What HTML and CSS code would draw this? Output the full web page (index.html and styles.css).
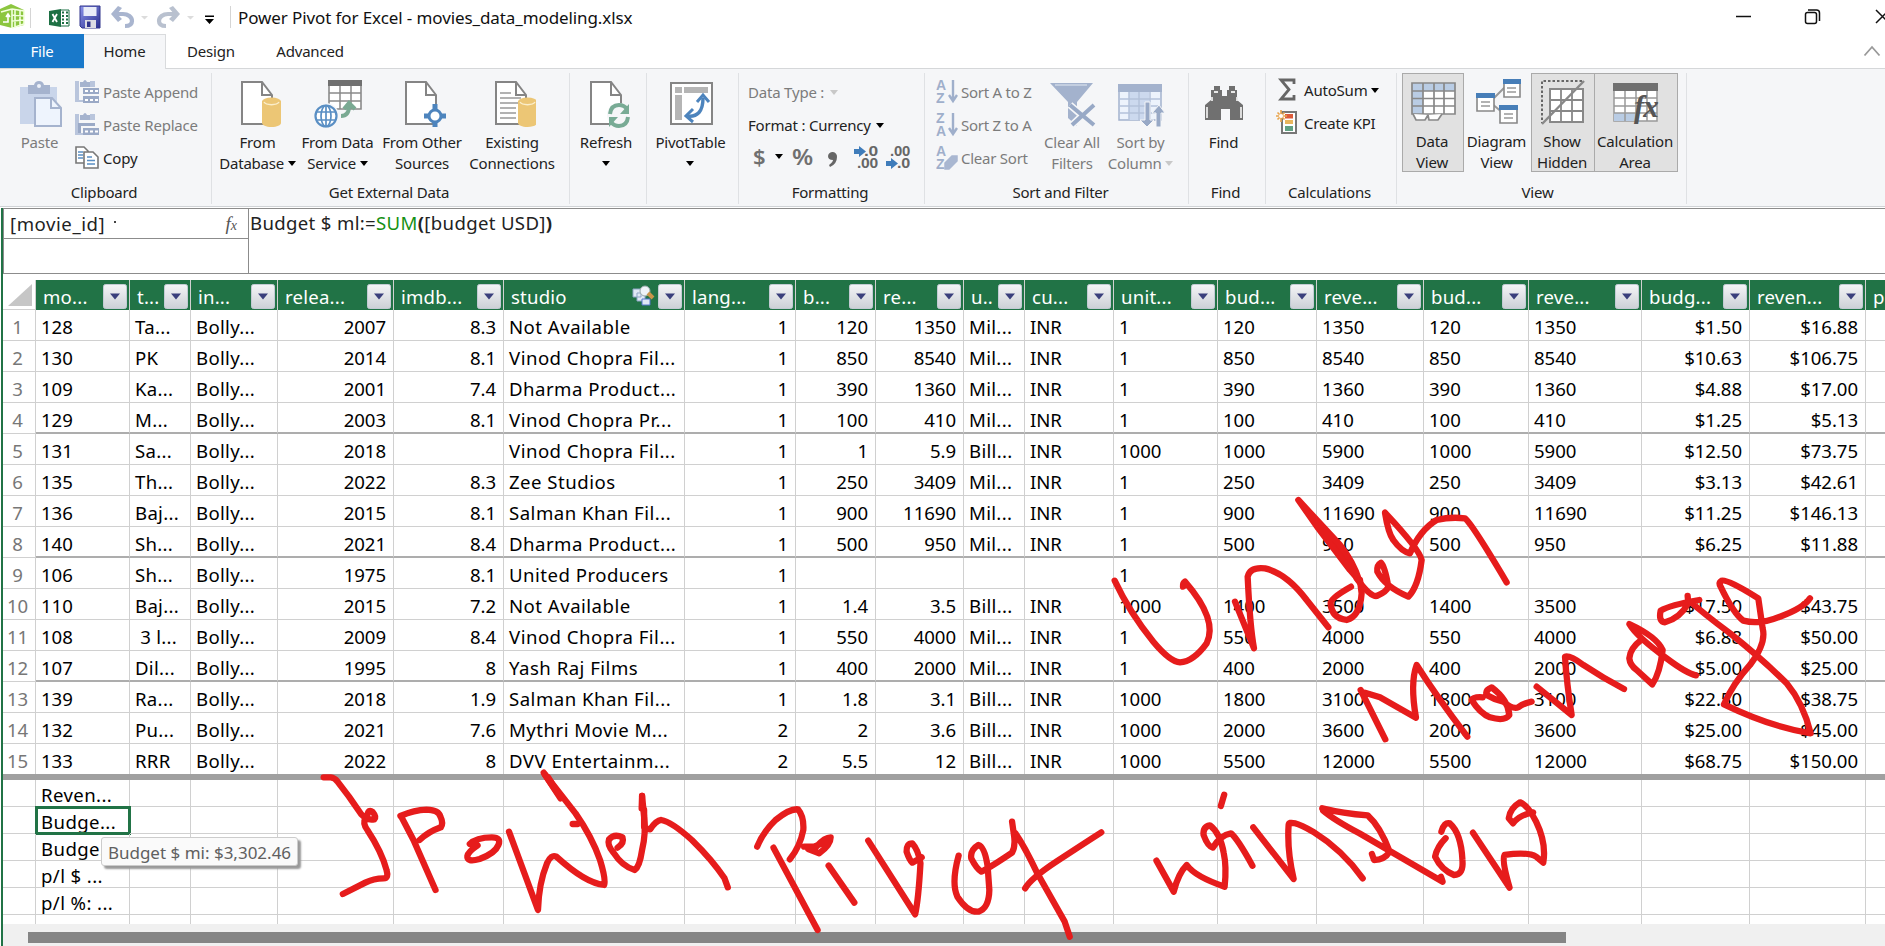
FILE: index.html
```
<!DOCTYPE html>
<html lang="en">
<head>
<meta charset="utf-8">
<title>Power Pivot for Excel - movies_data_modeling.xlsx</title>
<link rel="stylesheet" href="styles.css">
</head>
<body>
<svg class="defs" width="0" height="0">
  <defs>
    <linearGradient id="btn" x1="0" y1="0" x2="0" y2="1"><stop offset="0" stop-color="#f4f5f7"/><stop offset="1" stop-color="#ccd0d6"/></linearGradient>
    <linearGradient id="sv" x1="0" y1="0" x2="1" y2="1"><stop offset="0" stop-color="#8b93ea"/><stop offset="1" stop-color="#2a2f8e"/></linearGradient>
    <g id="page"><path d="M1 1h20l10 13v29H1z" fill="#fff" stroke="#858585" stroke-width="2"/><path d="M21 1v13h10" fill="none" stroke="#858585" stroke-width="2"/></g>
    <g id="cyl"><path d="M0 4v22c0 2 4 4 9.500 4s9.500-2 9.500-4V4z" fill="#ecc675"/><ellipse cx="9.500" cy="4.500" rx="9.500" ry="4" fill="#ecc675"/><path d="M2 5c2 3.500 13 3.500 15 0" fill="none" stroke="#fbeecb" stroke-width="1.500"/></g>
  </defs>
</svg>
<div class="window">
  <header class="titlebar">
    <svg class="qat" width="220" height="34" viewBox="0 0 220 34">
      <path d="M0 9l11-5 13 6v15l-12 3-12-3z" fill="#8cc63f"/><path d="M12 9v19M12 9l12 2v13l-12 4M15 10v17M20 11v15M12 15l12 1M12 21l12-1M12 9L1 12" fill="none" stroke="#f2ffdc" stroke-width="1.600"/><path d="M3 22h5v-7m-2 2l2-3 2 3" fill="none" stroke="#fff" stroke-width="1.600"/>
      <path d="M30.500 8v20" stroke="#d5d5d5"/>
      <path d="M49 11l12-2v18l-12-2z" fill="#1d7044"/><path d="M61 10h8v16h-8" fill="#fff" stroke="#1d7044"/><path d="M62 12.500h2m2 0h2M62 16h2m2 0h2M62 19.500h2m2 0h2M62 23h2m2 0h2" stroke="#1d7044" stroke-width="2.200"/><path d="M52.500 14l4.500 8m0-8l-4.500 8" stroke="#fff" stroke-width="1.800"/>
      <path d="M80 6h20v22H82l-2-2z" fill="url(#sv)" stroke="#30348c"/><path d="M83.500 7h13v9h-13z" fill="#e9ecf8"/><path d="M85 20h11v8H85z" fill="#dcdce4"/><path d="M87 21.500h3.500V27H87z" fill="#30348c"/>
      <path d="M114 14h9c5 0 9 3 9 7s-3 5-7 5" fill="none" stroke="#a9b5cf" stroke-width="4.200"/><path d="M111 14l7-8 4 2-5 6 5 5-4 3z" fill="#a9b5cf"/>
      <path d="M177 14h-9c-5 0-9 3-9 7s3 5 7 5" fill="none" stroke="#b9c1cf" stroke-width="4.200"/><path d="M180 14l-7-8-4 2 5 6-5 5 4 3z" fill="#b9c1cf"/>
      <path d="M141 16h7l-3.500 3.500zM187 16h7l-3.500 3.500z" fill="#dcdcdc"/>
      <path d="M205 15.500h9v1.600h-9zM205 19h9l-4.500 5z" fill="#000"/>
    </svg>
    <span class="bar"></span>
    <h1 class="title">Power Pivot for Excel - movies_data_modeling.xlsx</h1>
    <svg class="controls" width="160" height="34" viewBox="1725 0 160 34" fill="none" stroke="#111" stroke-width="1.500">
      <path d="M1736 16.500h15"/><rect x="1805.500" y="12.500" width="11" height="11" rx="2"/><path d="M1808 10h8.500q3 0 3 3v8"/><path d="M1876 10l13 13m0-13l-13 13"/>
    </svg>
  </header>
  <nav class="tabs">
    <span class="tab file">File</span><span class="tab home">Home</span><span class="tab design">Design</span><span class="tab adv">Advanced</span>
    <svg class="chev" width="18" height="12" viewBox="0 0 18 12"><path d="M1.500 10.500L9 2l7.500 8.500" fill="none" stroke="#999" stroke-width="1.800"/></svg>
  </nav>
  <section class="ribbon">
    <div class="group g-clip">
      <div class="items">
        <div class="big dim b-paste"><svg width="48" height="48" viewBox="0 0 48 48"><path d="M4 7h37v37H4z" fill="#c9d5ea"/><path d="M12 5h6q1-4 5-4t5 4h6v9H12z" fill="#a5b3ce"/><circle cx="23" cy="6" r="2" fill="#eef2fa"/><path d="M19 18h17l9 10v18H19z" fill="#eef4fd" stroke="#a5b3ce" stroke-width="2"/><path d="M35 18v10h10" fill="none" stroke="#a5b3ce" stroke-width="2"/></svg><span>Paste</span></div>
        <div class="stack">
          <div class="row dim"><svg width="25" height="25" viewBox="0 0 25 25"><path d="M0 2h4v19h4v2H0zM15 2h5v6h-5z" fill="#b9c5dc"/><path d="M5 3h3q2-4 4 0h3v5H5z" fill="#a5b3ce"/><path d="M8 9h16v6H8zM8 17h16v7H8z" fill="#9aa9c6"/><path d="M10 11h3v2h-3zm5 0h3v2h-3zm5 0h3v2h-3zM10 20h3v2h-3zm5 0h3v2h-3zm5 0h3v2h-3z" fill="#fff"/></svg><span>Paste Append</span></div>
          <div class="row dim"><svg width="25" height="25" viewBox="0 0 25 25"><path d="M0 2h4v19h4v2H0zM15 2h5v6h-5z" fill="#b9c5dc"/><path d="M5 3h3q2-4 4 0h3v5H5z" fill="#a5b3ce"/><path d="M3 11h17v3H6v7H3z" fill="#9aa9c6"/><path d="M8 16h16v7H8z" fill="#9aa9c6"/><path d="M10 18.500h3v2h-3zm5 0h3v2h-3zm5 0h3v2h-3z" fill="#fff"/></svg><span>Paste Replace</span></div>
          <div class="row"><svg width="25" height="25" viewBox="0 0 25 25" stroke="#777" stroke-width="1.600" fill="#fff"><path d="M1 2h8l4 4v12H1z"/><path d="M9 7h9l5 5v11H9z"/><path d="M3 7h5M3 10h5M3 13h5M12 12h5M12 15.500h8M12 19h8" stroke="#5a8fc4"/></svg><span>Copy</span></div>
        </div>
      </div>
      <div class="glabel">Clipboard</div>
    </div>
    <div class="group g-ext">
      <div class="items">
        <div class="big w80"><svg width="48" height="48" viewBox="0 0 48 48"><use href="#page" x="7" y="1"/><use href="#cyl" x="28" y="17"/></svg><span>From<br>Database <i class="ar"></i></span></div>
        <div class="big w80"><svg width="48" height="48" viewBox="0 0 48 48"><path d="M15 1h32v28H15z" fill="#fff" stroke="#8a8a8a" stroke-width="1.600"/><path d="M14 0h34v6H14z" fill="#707070"/><path d="M15 13h32M15 21h32M26 6v23M37 6v23" stroke="#8a8a8a" stroke-width="1.500"/><circle cx="12" cy="36" r="13" fill="#f5f6f8"/><circle cx="12" cy="36" r="10.500" fill="#fff" stroke="#5a8fc4" stroke-width="2.200"/><ellipse cx="12" cy="36" rx="5" ry="10.500" fill="none" stroke="#5a8fc4" stroke-width="1.700"/><path d="M2 32h20M2 40h20M12 26v20" stroke="#5a8fc4" stroke-width="1.700"/><path d="M27 36q8 0 8-10m-5 3l5-6 6 6" fill="none" stroke="#7aaa93" stroke-width="4"/></svg><span>From Data<br>Service <i class="ar"></i></span></div>
        <div class="big w89"><svg width="48" height="48" viewBox="0 0 48 48"><use href="#page" x="7" y="1"/><path d="M37 24v23M26 36h23" stroke="#4d84bd" stroke-width="5"/><circle cx="37" cy="36" r="6" fill="#fff" stroke="#4d84bd" stroke-width="3"/></svg><span>From Other<br>Sources</span></div>
        <div class="big w91"><svg width="48" height="48" viewBox="0 0 48 48"><use href="#page" x="7" y="1"/><path d="M12 13h11M12 18h21M12 23h18M12 28h16M12 33h16M12 38h16" stroke="#999" stroke-width="1.600"/><use href="#cyl" x="30" y="17"/></svg><span>Existing<br>Connections</span></div>
      </div>
      <div class="glabel gl-ext">Get External Data</div>
    </div>
    <div class="group g-ref"><div class="items"><div class="big w77"><svg width="48" height="48" viewBox="0 0 48 48"><use href="#page" x="8" y="1"/><circle cx="37" cy="35" r="12" fill="#f5f6f8"/><path d="M28 34q1-9 9-9 5 0 8 4M46 37q-1 9-9 9-5 0-8-4" fill="none" stroke="#78ab95" stroke-width="4"/><path d="M47 24v10h-9zM27 47V37h9z" fill="#78ab95"/></svg><span>Refresh<br><i class="ar"></i></span></div></div></div>
    <div class="group g-piv"><div class="items"><div class="big w92"><svg width="48" height="48" viewBox="0 0 48 48"><path d="M4 3h41v41H4z" fill="#fff" stroke="#858585" stroke-width="2"/><path d="M8 7h7v6H8zM17 7h24v6H17zM8 15h7v25H8z" fill="#b5b5b5"/><path d="M20 36q16 2 16-18" fill="none" stroke="#4d84bd" stroke-width="3.400"/><path d="M30 22l6-7 6 7M26 29l-7 7 7 6" fill="none" stroke="#4d84bd" stroke-width="3"/></svg><span>PivotTable<br><i class="ar"></i></span></div></div></div>
    <div class="group g-fmt">
      <div class="fmt">
        <div class="frow dim">Data Type : <i class="ar"></i></div>
        <div class="frow">Format : Currency <i class="ar"></i></div>
        <svg width="170" height="30" viewBox="0 0 170 30"><g class="sym"><text x="5" y="23">$</text><text x="44" y="23" textLength="21" lengthAdjust="spacingAndGlyphs">%</text></g><path d="M27 12h8l-4 5z" fill="#000"/><path d="M80 14a4.500 4.500 0 1 1 9 1q0 7-7 10l-1-2q4-3 4-5-5 0-5-4z" fill="#666"/><g class="num"><text x="116" y="14" textLength="14" lengthAdjust="spacingAndGlyphs">.0</text><text x="109" y="26" textLength="21" lengthAdjust="spacingAndGlyphs">.00</text><text x="142" y="14" textLength="20" lengthAdjust="spacingAndGlyphs">.00</text><text x="149" y="26" textLength="13" lengthAdjust="spacingAndGlyphs">.0</text></g><path d="M106 7h5V4l7 5.500-7 5.500v-3h-5zM138 19h5v-3l7 5.500-7 5.500v-3h-5z" fill="#3f7cba"/></svg>
      </div>
      <div class="glabel">Formatting</div>
    </div>
    <div class="group g-sort">
      <div class="items">
        <div class="stack">
          <div class="row dim"><svg width="25" height="25" viewBox="0 0 25 25"><g class="az"><text x="0" y="11">A</text><text x="0" y="24">Z</text></g><path d="M17 1v20m-4-5l4 6 4-6" fill="none" stroke="#9fafcb" stroke-width="2.400"/></svg><span>Sort A to Z</span></div>
          <div class="row dim"><svg width="25" height="25" viewBox="0 0 25 25"><g class="az"><text x="0" y="11">Z</text><text x="0" y="24">A</text></g><path d="M17 1v20m-4-5l4 6 4-6" fill="none" stroke="#9fafcb" stroke-width="2.400"/></svg><span>Sort Z to A</span></div>
          <div class="row dim"><svg width="25" height="25" viewBox="0 0 25 25"><g class="az"><text x="0" y="11">A</text><text x="0" y="24">Z</text></g><path d="M9 18l7-7h5v5l-8 8H9z" fill="#a9b7d1" stroke="#a9b7d1" stroke-width="1.500"/></svg><span>Clear Sort</span></div>
        </div>
        <div class="big dim w67"><svg width="48" height="48" viewBox="0 0 48 48"><path d="M2 3h43L29 22v24l-9-8V22z" fill="#a3b2cd"/><path d="M7 5h32" stroke="#c3cee0" stroke-width="2"/><path d="M22 25l22 19M45 25L24 45" stroke="#f5f6f8" stroke-width="7"/><path d="M22 25l24 20M46 25L24 45" stroke="#98a9c6" stroke-width="4"/></svg><span>Clear All<br>Filters</span></div>
        <div class="big dim w70"><svg width="48" height="48" viewBox="0 0 48 48"><path d="M2 5h42v35H2z" fill="#edf3fc" stroke="#a3b2cd" stroke-width="1.500"/><path d="M12 12h20v28H12z" fill="#ccd9ee"/><path d="M1 4h44v8H1z" fill="#a3b2cd"/><path d="M2 19h42M2 26h42M2 33h42M12 12v28M22 12v28M33 12v28" stroke="#b4c2da" stroke-width="1.500"/><path d="M28 22v18h-5l7 7 7-7h-4V22zM39 47V33h-4l7-8 6 8h-4v14z" fill="#98a9c6" stroke="#f5f6f8"/></svg><span>Sort by<br>Column <i class="ar"></i></span></div>
      </div>
      <div class="glabel">Sort and Filter</div>
    </div>
    <div class="group g-find"><div class="items"><div class="big w70"><svg width="48" height="48" viewBox="0 0 48 48"><path d="M14 6h6v4h2v6h5v-6h2V6h6v4h2v10l6 5v15H30V29h-9v11H5V25l6-5V10h3z" fill="#707070"/><path d="M7 27v11M41 27v11M14 12h4M31 12h4M12 17v4M37 17v4" stroke="#e8e8e8" stroke-width="1.800"/></svg><span>Find</span></div></div><div class="glabel">Find</div></div>
    <div class="group g-calc">
      <div class="stack">
        <div class="row"><svg width="25" height="25" viewBox="0 0 25 25"><path d="M18 7V3H5l8 9.500L5 22h13v-4" fill="none" stroke="#666" stroke-width="2.800"/></svg><span>AutoSum <i class="ar"></i></span></div>
        <div class="row"><svg width="25" height="25" viewBox="0 0 25 25"><path d="M6 2h14v21H6z" fill="#fff" stroke="#777" stroke-width="2"/><path d="M9 4h8v4.500H9z" fill="#dc5b3b"/><path d="M9 10h8v4H9z" fill="#e9b65d"/><path d="M9 16h8v5H9z" fill="#62a184"/><path d="M5 0v12M0 6h11M1.500 2.500l7 7M8.500 2.500l-7 7" stroke="#e9a64f" stroke-width="1.700"/><circle cx="5" cy="6" r="2" fill="#fff"/></svg><span>Create KPI</span></div>
      </div>
      <div class="glabel">Calculations</div>
    </div>
    <div class="group g-view">
      <div class="items">
        <div class="big on v1"><svg width="48" height="48" viewBox="0 0 48 48"><path d="M4 4h43v31H4z" fill="#fff"/><path d="M4 4h43v8H4zM4 12h11v23H4z" fill="#b9cce4"/><path d="M4 4h43v31H4zM4 12h43M4 19.500h43M4 27h43M15 4v31M26 4v31M36 4v31" fill="none" stroke="#888" stroke-width="1.700"/><path d="M5 35l3 6h9l3-5M20 36l1 5h9l4-6" fill="#fff" stroke="#888" stroke-width="1.700"/></svg><span>Data<br>View</span></div>
        <div class="big v2"><svg width="48" height="48" viewBox="0 0 48 48"><path d="M18 22L32 8M18 24l12 10" stroke="#999" stroke-width="2"/><g fill="#fff" stroke="#888" stroke-width="1.600"><path d="M31 1h16v17H31zM4 15h17v17H4zM27 27h17v17H27z"/></g><path d="M30 0h18v5H30zM3 14h19v5H3zM26 26h19v5H26z" fill="#477eb8"/><path d="M34 9h9M34 13h9M8 23h9M8 27h9M31 35h9M31 39h9" stroke="#999" stroke-width="1.500"/></svg><span>Diagram<br>View</span></div>
        <div class="big on v3"><svg width="48" height="48" viewBox="0 0 48 48"><path d="M12 10h33v33H12z" fill="#fff" stroke="#888" stroke-width="2"/><path d="M12 21h33M12 32h33M23 10v33M34 10v33" stroke="#888" stroke-width="1.800"/><path d="M44 2H4v42" fill="none" stroke="#666" stroke-width="2" stroke-dasharray="2.500 2"/><path d="M4 45L46 2" stroke="#888" stroke-width="2.400"/></svg><span>Show<br>Hidden</span></div>
        <div class="big on v4"><svg width="48" height="48" viewBox="0 0 48 48"><path d="M3 5h43v37H3z" fill="#fff" stroke="#999" stroke-width="1.500"/><path d="M2 4h45v8H2z" fill="#707070"/><path d="M3 34h22v8H3z" fill="#b9cce4"/><path d="M3 19h43M3 27h43M3 34h43M14 12v30M25 12v30M36 12v30" stroke="#999" stroke-width="1.500"/><text class="fxi" x="23" y="38">fx</text></svg><span>Calculation<br>Area</span></div>
      </div>
      <div class="glabel gl-view">View</div>
    </div>
  </section>
  <main class="sheet">
    <div class="fbar">
      <div class="names"><div class="namebox"><span>[movie_id]</span><b></b><em>f<small>x</small></em></div></div>
      <div class="formula">Budget $ ml:=<span class="fn">SUM</span><b>(</b>[budget USD]<b>)</b></div>
    </div>
    <div class="grid" id="grid"></div>
    <div class="split"></div>
    <div class="calc" id="calc"></div>
    <div class="scroll"><div class="thumb"></div></div>
    <div class="tip">Budget $ mi: $3,302.46</div>
  </main>
  <svg class="ink" width="1885" height="946" viewBox="0 0 1885 946">
    <g transform="translate(300 750) scale(.4082 .3333)">
      <path d="M58 82H75Q85 83 92 95L120 140L150 193Q158 205 165 195Q168 176 178 186Q188 200 182 208Q170 210 160 205Q153 220 165 240Q200 305 212 360Q218 385 205 385Q180 385 160 398L105 432"/>
      <path d="M248 200L278 270L332 420M246 198Q280 180 310 179Q340 180 344 200Q352 220 345 232Q315 245 293 270"/>
      <path d="M416 282Q432 262 470 262Q494 262 486 285Q478 310 440 327Q408 338 410 318Q412 305 435 286"/>
      <path d="M512 245L583 480Q585 400 605 340Q615 312 628 320Q700 400 745 405Q750 390 735 330Q715 260 675 190L597 68L638 145"/><path d="M600 74L632 130L608 82M668 222H680"/>
      <path d="M778 293Q795 280 790 262Q770 250 757 268Q752 285 768 308Q790 350 820 360Q832 350 838 300Q848 250 843 200L838 138M845 235L858 238Q872 212 885 210Q910 215 960 270Q1010 330 1040 385L1048 412"/><path d="M838 138L837 175M843 180V230"/>
      <path d="M1120 290Q1135 245 1165 210Q1200 175 1220 178Q1235 200 1233 240Q1225 290 1200 328M1160 293L1268 540M1235 290L1265 290Q1285 262 1300 262Q1300 285 1272 310L1245 297L1290 275M1295 347L1358 458"/>
      <path d="M1392 272L1507 493Q1515 450 1520 340Q1515 300 1500 280Q1485 280 1486 305Q1493 330 1500 338L1523 322"/>
    </g>
    <g transform="translate(930 750) scale(.4209 .3333)">
      <path d="M68 317Q50 400 65 440Q90 488 115 485Q140 475 141 420L137 350Q130 290 115 285Q95 300 98 325Q110 355 122 365Q140 355 195 308Q203 290 200 260L195 215M203 250Q225 290 255 370L320 515L332 560M226 415Q240 385 300 335Q360 285 407 247"/>
      <path d="M538 332L579 425Q590 370 610 345Q630 380 700 410Q705 350 698 310Q690 250 665 226Q648 230 650 255Q660 290 672 293Q690 255 715 250Q730 265 766 347M699 134L691 168"/>
      <path d="M768 232L864 387Q848 300 852 225Q853 205 910 245Q980 300 1028 385"/>
      <path d="M934 182Q960 210 1020 250L1218 395L1214 380M932 175Q980 190 1040 196Q1070 230 1092 305Q1080 330 1055 330L1050 312"/>
      <path d="M1215 245Q1222 215 1235 220Q1262 250 1265 330Q1268 375 1245 375Q1215 360 1200 320Q1205 290 1225 265"/>
      <path d="M1290 248L1377 413Q1358 330 1365 315Q1420 305 1440 320L1457 338Q1465 280 1440 215Q1420 165 1402 157Q1378 175 1375 205L1385 220Q1400 195 1433 187"/>
    </g>
    <g transform="translate(1090 470) scale(.3333)">
      <path d="M74 332Q120 430 190 515Q240 575 270 577Q310 575 350 520Q385 450 285 335Q278 340 279 350"/>
      <path d="M435 395L492 535Q480 470 473 320Q480 290 525 295Q590 310 650 390L715 472"/>
      <path d="M783 350Q720 385 722 400Q725 445 770 450Q810 440 815 370L810 330"/>
      <path class="fill" d="M625 90L750 225Q790 275 808 332L780 300L685 175Z"/>
      <path d="M800 325Q840 380 860 378Q890 365 895 350Q885 290 873 278Q860 285 862 305Q885 350 955 380Q985 350 995 270Q990 240 885 128Q895 190 910 210Q935 245 960 250Q990 180 1040 150Q1080 140 1125 145Q1145 160 1250 337"/>
      <path d="M812 660L886 808M825 668L870 682L978 743Q960 640 980 585Q1040 680 1132 800"/>
      <path d="M1178 682Q1150 680 1145 690Q1170 730 1200 742Q1245 755 1258 735Q1255 690 1205 652Q1185 660 1190 675Q1215 690 1240 695Q1270 720 1285 712Q1300 700 1325 695"/>
    </g>
    <g transform="translate(1470 550) scale(.3333)">
      <path d="M200 410L305 495Q290 400 285 320Q300 315 340 345Q400 385 462 417"/>
      <path d="M516 268Q480 295 478 325Q480 345 500 360L547 403Q570 370 578 300Q560 260 478 222Q500 260 590 325Q650 370 678 376"/>
      <path d="M688 150Q600 165 572 182Q565 215 585 217Q630 205 655 160L653 138M655 150Q700 190 780 250Q880 330 950 400Q1000 460 1022 550Q900 530 762 463Q790 400 840 345Q890 280 878 235L865 145Q770 85 755 92Q745 98 752 110Q790 190 820 212Q870 225 930 200Q1000 175 1020 145"/>
    </g>
  </svg>
</div>
<script src="grid.js"></script>
</body>
</html>
```
FILE: styles.css
```
*{box-sizing:border-box}
body{margin:0;background:#fff;font-family:"Noto Sans","Open Sans",sans-serif;color:#222}
.defs{position:absolute}
.window{position:relative;width:1885px;height:946px;overflow:hidden;display:flex;flex-direction:column;background:#fff}
.titlebar{height:34px;display:flex;align-items:center;flex:none}
.bar{width:1px;height:22px;background:#d5d5d5;margin:0 7px 0 10px}
.title{margin:2px auto 0 0;font-size:17px;font-weight:400;line-height:30px;letter-spacing:-.1px;color:#111}
.tabs{height:34px;display:flex;flex:none;font-size:15px;line-height:34px;text-align:center;letter-spacing:-.2px;align-items:stretch}
.file{width:84px;background:#1979ca;color:#fff}
.home{width:82px;height:35px;line-height:33px;background:#f5f6f8;border:1px solid #d9dbdd;border-width:1px 1px 0 0;z-index:1}
.design{width:90px}
.adv{width:108px}
.chev{margin:11px 4px 0 auto}
.ribbon{height:139px;flex:none;display:flex;background:#f5f6f8;border-top:1px solid #d5d7d9;border-bottom:1px solid #d0d3d6;font-size:15px;letter-spacing:-.2px}
.group{border-right:1px solid #dfe1e4;margin:4px 0 4px;height:131px;display:flex;flex-direction:column;justify-content:space-between}
.glabel{text-align:center;line-height:20px;padding:0 3px 2px 0}
.gl-ext{padding-right:9px}
.gl-view{padding-right:13px}
.items{display:flex}
.big{display:flex;flex-direction:column;align-items:center;text-align:center;padding:7px 1px 0 0;line-height:21px;white-space:nowrap}
.big svg{margin-bottom:4px;flex:none}
.dim{color:#7c7c7c}
.ar{display:inline-block;border:4px solid transparent;border-top:5px solid #000;border-bottom:0;vertical-align:3px}
.dim .ar{border-top-color:#c8c8c8}
.stack{display:flex;flex-direction:column}
.row{display:flex;align-items:center;gap:3px;height:33px;white-space:nowrap}
.g-clip{width:212px}.b-paste{width:75px;padding-left:5px}
.g-clip .stack,.g-sort .stack{padding-top:2px}
.g-ext{width:358px;padding-left:6px}
.g-ref{width:77px}.g-piv{width:92px}.g-fmt{width:186px}.g-sort{width:264px;padding-left:11px}.g-find{width:77px}.g-calc{width:131px;padding-left:10px}.g-view{width:290px;padding-left:5px}
.w80{width:80px}.w89{width:89px}.w91{width:91px}.w77{width:73px}.w92{width:88px}.w67{width:67px}.w70{width:70px}
.g-sort .stack{width:103px;letter-spacing:-.25px}
.g-sort .row{gap:0}
.fmt{padding:3px 0 0 9px}
.frow{height:33px;line-height:33px;white-space:nowrap}
.frow .ar{margin-left:2px}
.fmt svg{display:block}
.sym{font:600 22px "Noto Sans";fill:#707070}
.num{font:700 14px "Liberation Sans";fill:#666}
.az{font:700 14px "Liberation Sans";fill:#9fafcb}
.fxi{font:italic 700 31px "Liberation Serif";fill:#555;letter-spacing:-1px}
.g-calc .glabel{margin-left:-10px}
.g-view .big{height:99px;padding-top:6px;padding-right:2px}
.g-view .on{padding-top:5px}
.on{background:#e1e1e1;border:1px solid #aaa}
.v1{width:62px}.v2{width:67px}.v3{width:63px}.v4{width:84px}
.v3{border-right:0}
.sheet{position:relative;flex:1;display:flex;flex-direction:column;border-left:2px solid #217346;margin:1px 0 0 1px}
.fbar{height:66px;flex:none;display:flex;border:1px solid #8c8c8c;border-right:0;font-size:18.600px}
.names{width:245px;border-right:1px solid #8c8c8c}
.namebox{height:30px;border-bottom:1px solid #8c8c8c;display:flex;align-items:center;padding-left:6px;letter-spacing:.55px}
.namebox b{width:2px;height:2px;background:#444;margin:-4px auto 0 9px}
.namebox em{font:italic 19px "Liberation Serif";color:#555;margin-right:11px;letter-spacing:0}
.namebox small{font-size:14px}
.formula{padding-left:1px;line-height:28px;letter-spacing:.33px}
.fn{color:#159015}
.grid{margin-top:6px;flex:none;height:494px;overflow:hidden;font-size:18.600px}
.line{display:grid;grid-template-columns:33px 94px 61px 87px 116px 110px 181px 111px 80px 88px 61px 89px 104px 99px 107px 105px 113px 108px 116px 100px;width:1963px}
.cell{border-right:1px solid #d0d0d0;border-bottom:1px solid #d0d0d0;height:31px;line-height:33px;padding:0 7px 0 5px;white-space:nowrap;overflow:hidden;letter-spacing:-.05px;color:#000}
.t{letter-spacing:.3px}
.s{letter-spacing:.48px}
.r{text-align:right}
.head .cell{height:30px;line-height:31px;background:#217346;color:#fff;display:flex;justify-content:space-between;align-items:center;padding:2px 2px 0 7px;border-bottom:0;letter-spacing:.2px}
.head .cell:first-child{background:#fff;padding:0 2px 0 4px;border-bottom:1px solid #d0d0d0}
.num-cell{color:#777;text-align:center;padding:0 3px 0 0}
.thick .cell:not(:first-child){border-bottom:2px solid #adadad}
.key{margin-left:auto;margin-right:2px}
.split{height:6px;flex:none;background:#a0a0a0}
.calc{height:144px;flex:none;overflow:hidden;font-size:18.600px}
.calc .cell{height:27px;line-height:29px;letter-spacing:.4px}
.calc .sel{outline:3px solid #217346;outline-offset:-2px}
.scroll{height:22px;background:#f0f0f0;padding:8px 0 0 25px}
.thumb{width:1538px;height:11px;background:#858585}
.tip{position:absolute;left:98px;top:629px;width:197px;height:29px;background:#fafafa;border:1px solid #ccc;border-radius:3px;box-shadow:3px 3px 2px #999;color:#606060;font-size:17px;line-height:30px;text-align:center;white-space:nowrap}
.ink{position:absolute;left:0;top:0;fill:none;stroke:#e61c1c;stroke-width:6.300px;stroke-linecap:round;stroke-linejoin:round}
.ink path{vector-effect:non-scaling-stroke}
.ink .fill{fill:#e61c1c}
```
FILE: grid.js
```
const heads = ["mo...", "t...", "in...", "relea...", "imdb...", "studio", "lang...", "b...", "re...", "u..", "cu...", "unit...", "bud...", "reve...", "bud...", "reve...", "budg...", "reven...", "p"];
const right = new Set([3, 4, 6, 7, 8, 16, 17]);
const textual = new Set([1, 2, 9]);
const rows = `128|Ta...|2007|8.3|Not Available|1|120|1350|Mil...|INR|1|120|1350|$1.50|$16.88
130|PK|2014|8.1|Vinod Chopra Fil...|1|850|8540|Mil...|INR|1|850|8540|$10.63|$106.75
109|Ka...|2001|7.4|Dharma Product...|1|390|1360|Mil...|INR|1|390|1360|$4.88|$17.00
129|M...|2003|8.1|Vinod Chopra Pr...|1|100|410|Mil...|INR|1|100|410|$1.25|$5.13
131|Sa...|2018||Vinod Chopra Fil...|1|1|5.9|Bill...|INR|1000|1000|5900|$12.50|$73.75
135|Th...|2022|8.3|Zee Studios|1|250|3409|Mil...|INR|1|250|3409|$3.13|$42.61
136|Baj...|2015|8.1|Salman Khan Fil...|1|900|11690|Mil...|INR|1|900|11690|$11.25|$146.13
140|Sh...|2021|8.4|Dharma Product...|1|500|950|Mil...|INR|1|500|950|$6.25|$11.88
106|Sh...|1975|8.1|United Producers|1|||||1||||
110|Baj...|2015|7.2|Not Available|1|1.4|3.5|Bill...|INR|1000|1400|3500|$17.50|$43.75
108|\u00a03 l...|2009|8.4|Vinod Chopra Fil...|1|550|4000|Mil...|INR|1|550|4000|$6.88|$50.00
107|Dil...|1995|8|Yash Raj Films|1|400|2000|Mil...|INR|1|400|2000|$5.00|$25.00
139|Ra...|2018|1.9|Salman Khan Fil...|1|1.8|3.1|Bill...|INR|1000|1800|3100|$22.50|$38.75
132|Pu...|2021|7.6|Mythri Movie M...|2|2|3.6|Bill...|INR|1000|2000|3600|$25.00|$45.00
133|RRR|2022|8|DVV Entertainm...|2|5.5|12|Bill...|INR|1000|5500|12000|$68.75|$150.00`.split("\n");

const drop = '<svg width="24" height="25" viewBox="0 0 24 25"><rect x=".5" y=".5" width="23" height="24" rx="2" fill="url(#btn)" stroke="#c3cbd4"/><path d="M7 9.500h10l-5 6z" fill="#3a3f7c"/></svg>';
const key = '<svg class="key" width="24" height="22" viewBox="0 0 24 22"><path d="M1 4h8v8H1zM5 8h8v8H5z" fill="#dfe8f5" stroke="#8fa5c5"/><path d="M10 14h8v6h-8z" fill="#dfe8f5" stroke="#5577cc"/><circle cx="13" cy="6" r="5" fill="#eef3f8" stroke="#9aa"/><path d="M16 8l5 5" stroke="#c9954a" stroke-width="4"/></svg>';
const cell = (t, c) => `<div class="cell ${c}">${t}</div>`;

let html = '<div class="line head"><div class="cell"><svg width="25" height="24" viewBox="0 0 25 24"><path d="M25 1v22H1z" fill="#c6c6c6"/></svg></div>';
heads.forEach((h, i) => {
  html += cell(`<span>${h}</span>${i === 5 ? key : ""}${i < 18 ? drop : ""}`, "");
});
html += "</div>";
rows.forEach((line, n) => {
  const v = line.split("|");
  const full = [v[0], v[1], "Bolly...", ...v.slice(2, 13), v[11], v[12], v[13], v[14], ""];
  html += `<div class="line${[3, 7, 11].includes(n) ? " thick" : ""}">` + cell(n + 1, "num-cell") +
    full.map((t, i) => cell(t, right.has(i) ? "r" : i === 5 ? "s" : textual.has(i) ? "t" : "")).join("") + "</div>";
});
document.getElementById("grid").innerHTML = html;

document.getElementById("calc").innerHTML = ["Reven...", "Budge...", "Budge...", "p/l $ ...", "p/l %: ...", ""].map((m, n) =>
  '<div class="line">' + cell("", "") + cell(m, n === 1 ? "sel" : "") + cell("", "").repeat(18) + "</div>").join("");
```
